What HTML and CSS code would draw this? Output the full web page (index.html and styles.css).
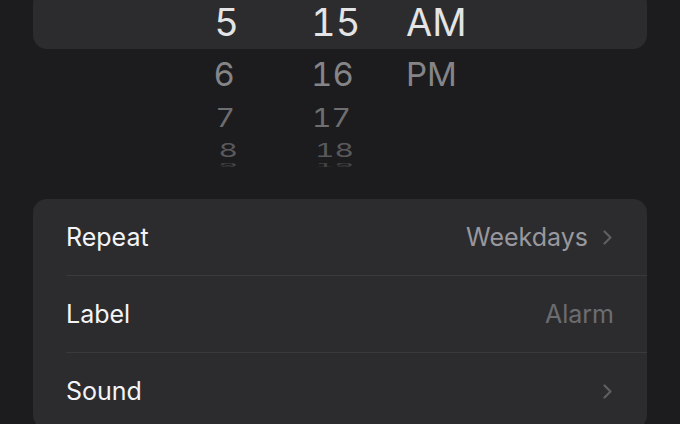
FILE: index.html
```html
<!DOCTYPE html>
<html lang="en">
	<head>
		<meta charset="UTF-8" />
		<meta name="viewport" content="width=device-width, initial-scale=1.0" />
		<title>Edit Alarm</title>
		<link rel="stylesheet" href="styles.css">
	</head>
	<body>
		<div class="picker">
			<div class="wheel-row selected">
				<span class="hour">5</span>
				<span class="minute">15</span>
				<span class="period">AM</span>
			</div>
			<div class="wheel-row near">
				<span class="hour">6</span>
				<span class="minute">16</span>
				<span class="period">PM</span>
			</div>
			<div class="wheel-row mid">
				<span class="hour">7</span>
				<span class="minute">17</span>
			</div>
			<div class="wheel-row far">
				<span class="hour">8</span>
				<span class="minute">18</span>
			</div>
			<div class="wheel-row edge">
				<span class="hour">9</span>
				<span class="minute">19</span>
			</div>
		</div>

		<div class="settings">
			<div class="setting">
				<span class="name">Repeat</span>
				<span class="value">Weekdays</span>
				<svg class="chevron" viewBox="0 0 9 15" width="9" height="15">
					<path d="M1.5 1.5 L7.5 7.5 L1.5 13.5" fill="none" stroke="currentColor" stroke-width="2.2" stroke-linecap="round" stroke-linejoin="round" />
				</svg>
			</div>
			<div class="setting">
				<span class="name">Label</span>
				<span class="value placeholder">Alarm</span>
			</div>
			<div class="setting">
				<span class="name">Sound</span>
				<span class="value"></span>
				<svg class="chevron" viewBox="0 0 9 15" width="9" height="15">
					<path d="M1.5 1.5 L7.5 7.5 L1.5 13.5" fill="none" stroke="currentColor" stroke-width="2.2" stroke-linecap="round" stroke-linejoin="round" />
				</svg>
			</div>
		</div>
	</body>
</html>
```

FILE: styles.css
```css
html,
body {
	margin: 0;
	background-color: #1c1c1e;
	font-family: Inter, "Liberation Sans", sans-serif;
	overflow: hidden;
}
.picker {
	margin: -10px 33px 0;
}
.wheel-row {
	display: flex;
	font-size: 30px;
	font-variant-numeric: tabular-nums;
	white-space: nowrap;
}
.hour {
	width: 205px;
	text-align: right;
}
.minute {
	width: 95px;
	margin-left: 73px;
}
.selected {
	height: 59px;
	box-sizing: border-box;
	padding-top: 5px;
	line-height: 54px;
	font-size: 38px;
	color: #e4e4e6;
	background-color: #2c2c2e;
	border-radius: 14px;
}
.selected .hour {
	width: 206px;
}
.selected .minute {
	margin-left: 72px;
}
.near {
	line-height: 50px;
	font-size: 33px;
	color: #858588;
}
.near .hour {
	width: 202px;
}
.near .minute {
	margin-left: 76px;
	width: 95px;
}
.mid {
	line-height: 38px;
	color: #6e6e70;
	transform: scaleY(0.86);
}
.mid .hour {
	width: 202px;
}
.mid .minute {
	margin-left: 77px;
}
.far {
	line-height: 26px;
	color: #59595b;
	transform: scaleY(0.6);
}
.far .hour {
	width: 205px;
}
.far .minute {
	margin-left: 77px;
}
.edge {
	line-height: 4px;
	color: #444446;
	transform: scaleY(0.15);
}
.edge .minute {
	margin-left: 77px;
}
.settings {
	margin: 32px 33px 0;
	padding-left: 33px;
	background-color: #2c2c2e;
	border-radius: 14px;
}
.setting {
	display: flex;
	align-items: center;
	height: 76px;
	padding-right: 33px;
	border-bottom: 1px solid #3a3a3c;
	font-size: 25px;
}
.setting:last-child {
	border-bottom: none;
}
.name {
	flex: 1;
	color: #f4f4f6;
}
.value {
	color: #98989e;
}
.placeholder {
	color: #6c6c70;
}
.chevron {
	margin-left: 15px;
	margin-right: 2px;
	color: #5e5e63;
}
```
